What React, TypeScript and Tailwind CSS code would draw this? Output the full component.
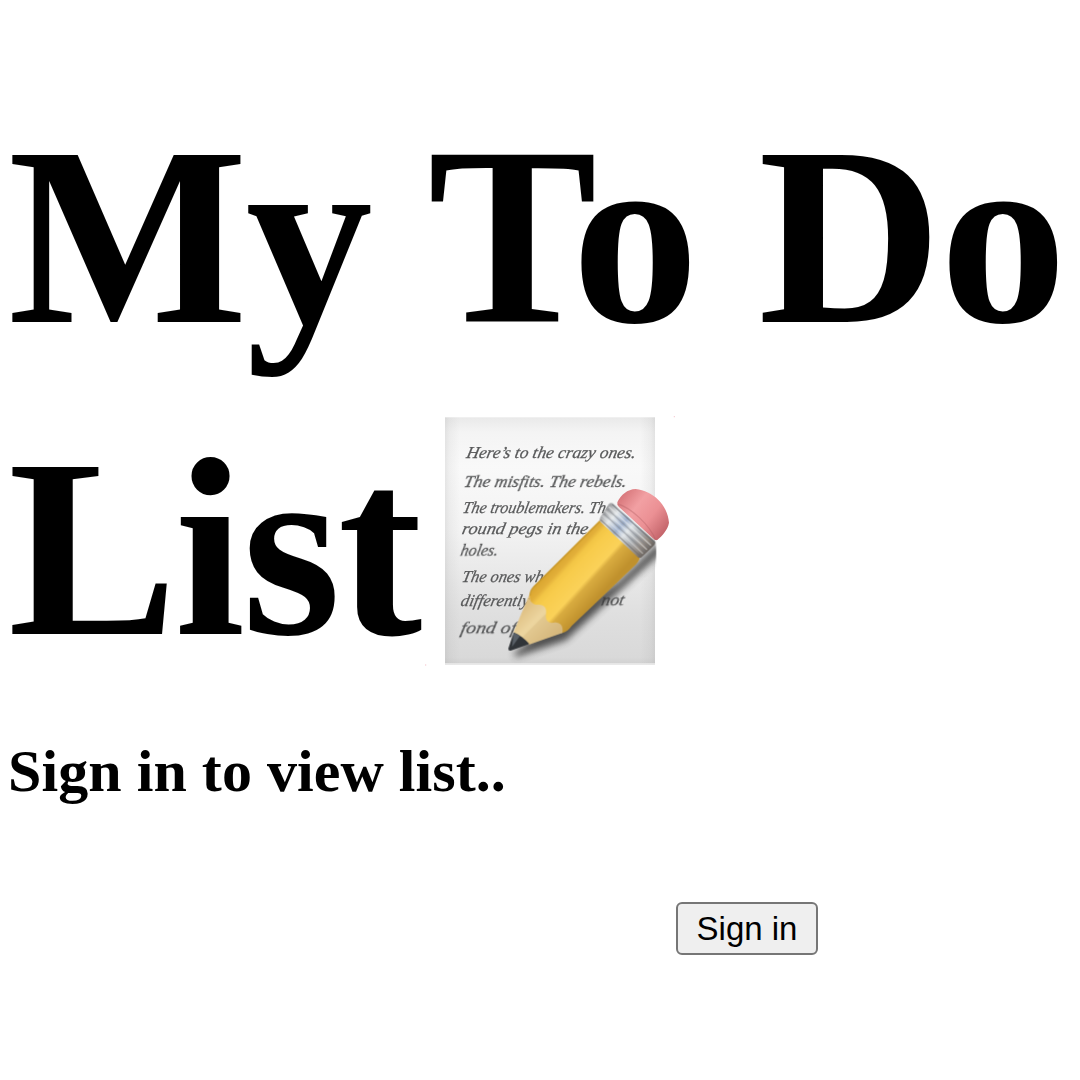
const lines = [
  { t: "Here’s to the crazy ones.", x: 137, y: 160, w: 508 },
  { t: "The misfits. The rebels.", x: 130, y: 245, w: 488 },
  { t: "The troublemakers. The", x: 126, y: 323, w: 450 },
  { t: "round pegs in the", x: 124, y: 387, w: 378 },
  { t: "holes.", x: 120, y: 451, w: 112 },
  { t: "The ones who", x: 124, y: 530, w: 268 },
  { t: "differently.", x: 120, y: 604, w: 215 },
  { t: "not", x: 542, y: 600, w: 68 },
  { t: "fond of", x: 120, y: 684, w: 166 },
];

function Memo() {
  return (
    <svg viewBox="60 0 750 810" className="block h-[270px] w-[250px] shrink-0 overflow-visible" aria-label="Memo">
      <defs>
        <linearGradient id="paper" x1="0" y1="0" x2="0" y2="1">
          <stop offset="0" stopColor="#e9e9e9" />
          <stop offset=".06" stopColor="#f4f4f4" />
          <stop offset=".2" stopColor="#f9f9f9" />
          <stop offset=".45" stopColor="#f3f3f3" />
          <stop offset=".8" stopColor="#dfdfdf" />
          <stop offset=".97" stopColor="#d9d9d9" />
          <stop offset="1" stopColor="#d0d0d0" />
        </linearGradient>
        <linearGradient id="edge" x1="0" y1="0" x2="1" y2="0">
          <stop offset="0" stopColor="#999" stopOpacity=".2" />
          <stop offset=".02" stopColor="#999" stopOpacity=".1" />
          <stop offset=".07" stopColor="#999" stopOpacity="0" />
          <stop offset=".93" stopColor="#999" stopOpacity="0" />
          <stop offset=".98" stopColor="#999" stopOpacity=".1" />
          <stop offset="1" stopColor="#999" stopOpacity=".2" />
        </linearGradient>
        <linearGradient id="body" gradientUnits="userSpaceOnUse" x1="430" y1="450" x2="550" y2="560">
          <stop offset="0" stopColor="#d9a52f" />
          <stop offset=".14" stopColor="#e3b03a" />
          <stop offset=".22" stopColor="#f3c646" />
          <stop offset=".32" stopColor="#f8cc4c" />
          <stop offset=".62" stopColor="#fbd259" />
          <stop offset=".7" stopColor="#d9ac40" />
          <stop offset="1" stopColor="#c0912d" />
        </linearGradient>
        <linearGradient id="metal" gradientUnits="userSpaceOnUse" x1="560" y1="315" x2="690" y2="435">
          <stop offset="0" stopColor="#a5a6a8" />
          <stop offset=".16" stopColor="#e3e7ea" />
          <stop offset=".36" stopColor="#9fb1ce" />
          <stop offset=".5" stopColor="#dfe4e8" />
          <stop offset=".66" stopColor="#adb1b6" />
          <stop offset=".85" stopColor="#938a82" />
          <stop offset="1" stopColor="#655f5b" />
        </linearGradient>
        <linearGradient id="rubber" gradientUnits="userSpaceOnUse" x1="605" y1="275" x2="745" y2="385">
          <stop offset="0" stopColor="#d9797d" />
          <stop offset=".3" stopColor="#f2a0a3" />
          <stop offset=".6" stopColor="#eb9094" />
          <stop offset="1" stopColor="#bd5d63" />
        </linearGradient>
        <linearGradient id="wood" gradientUnits="userSpaceOnUse" x1="300" y1="620" x2="390" y2="710">
          <stop offset="0" stopColor="#dfc083" />
          <stop offset=".4" stopColor="#edd6a0" />
          <stop offset="1" stopColor="#d9bb80" />
        </linearGradient>
        <filter id="soft" x="-20%" y="-20%" width="140%" height="140%">
          <feGaussianBlur stdDeviation="11" />
        </filter>
        <filter id="ink"><feGaussianBlur stdDeviation="1.2" /></filter>
        <clipPath id="sheet"><rect x="75" y="37" width="634" height="740" /></clipPath>
      </defs>
      <rect x="75" y="37" width="630" height="742" fill="url(#paper)" />
      <rect x="75" y="37" width="630" height="742" fill="url(#edge)" />
      <path d="M75 777H705" stroke="#ededed" strokeWidth="4" />
      <g fontFamily="Liberation Serif, serif" fontStyle="italic" fontWeight="400" fontSize="50" letterSpacing="0" fill="#58595a" stroke="#58595a" strokeWidth=".8" filter="url(#ink)">
        {lines.map((l) => (
          <text key={l.t} transform={`translate(${l.x} ${l.y}) skewX(-12)`} textLength={l.w} lengthAdjust="spacingAndGlyphs">
            {l.t}
          </text>
        ))}
      </g>
      <g clipPath="url(#sheet)">
        <path d="M276 744L425 694L705 438L713 420L700 405L580 520L360 660L268 735Z" fill="#393939" opacity=".85" filter="url(#soft)" transform="translate(12 12)" />
      </g>
      <path d="M540 345L659 456Q659 468 648 478L455 663Q444 679 427 684L390 676L330 600L328 571Q329 557 340 544Z" fill="url(#body)" />
      <path d="M541 348L342 545Q330 556 330 571" fill="none" stroke="#bd8d27" strokeWidth="4" opacity=".6" />
      <path d="M328 568C325 588 339 600 356 599C374 599 380 610 378 626C374 645 385 656 401 653C416 650 432 660 427 684L326 719L280 683Z" fill="url(#wood)" />
      <path d="M378 626C374 645 385 656 401 653C416 650 432 660 427 684L326 719Q316 708 304 700Z" fill="#cdaa6e" opacity=".25" />
      <path d="M281 682C298 689 315 702 328 717L272 737Q264 738 265 730Z" fill="#303438" />
      <path d="M281 682L300 693L276 726Z" fill="#596067" />
      <path d="M567 296Q574 291 582 298L703 407Q709 413 702 421L666 456Q659 462 651 454L540 349Q537 343 542 335Z" fill="url(#metal)" />
      <g fill="none" strokeWidth="4">
        <path d="M577 298L704 413" stroke="#686d73" opacity=".7" />
        <path d="M567 305L693 421" stroke="#f1f3f3" opacity=".55" />
        <path d="M562 312L688 428" stroke="#777b82" opacity=".5" />
        <path d="M556 318L681 434" stroke="#f1f3f3" opacity=".5" />
        <path d="M551 325L675 440" stroke="#777b82" opacity=".5" />
        <path d="M546 331L669 446" stroke="#f1f3f3" opacity=".4" />
        <path d="M541 343L662 454" stroke="#6f6a68" opacity=".6" />
      </g>
      <path d="M592 292C603 269 622 253 647 252C698 257 743 299 747 353C743 375 727 392 711 406Q704 406 698 399L597 306Q590 300 592 292Z" fill="url(#rubber)" />
      <path d="M594 297C633 309 688 358 707 405" fill="none" stroke="#ae5d62" strokeWidth="4" opacity=".35" />
      <circle cx="763" cy="35" r="2" fill="#f5c9d0" />
      <circle cx="17" cy="780" r="2" fill="#f5c9d0" />
    </svg>
  );
}

export default function App() {
  return (
    <main className="h-[1080px] w-[1080px] overflow-hidden bg-white px-2 font-['Liberation_Serif',serif] text-black">
      <h1 className="pt-[81px] text-[254px] leading-[312px] font-bold tracking-[-2px] whitespace-nowrap">
        <span className="block h-[312px]">My To Do</span>
        <span className="flex h-[312px]">
          <span className="w-[432px] tracking-[-3px]">List</span>
          <span className="mt-[12px]"><Memo /></span>
        </span>
      </h1>
      <h2 className="mt-[32px] text-[60px] leading-[68px] font-bold tracking-[0.05px]">Sign in to view list..</h2>
      <button className="mt-[97px] ml-[668px] block h-[53px] w-[142px] rounded-[6px] border-2 border-[#767676] bg-[#efefef] font-['Liberation_Sans',sans-serif] text-[33px] leading-[48px]">
        Sign in
      </button>
    </main>
  );
}
